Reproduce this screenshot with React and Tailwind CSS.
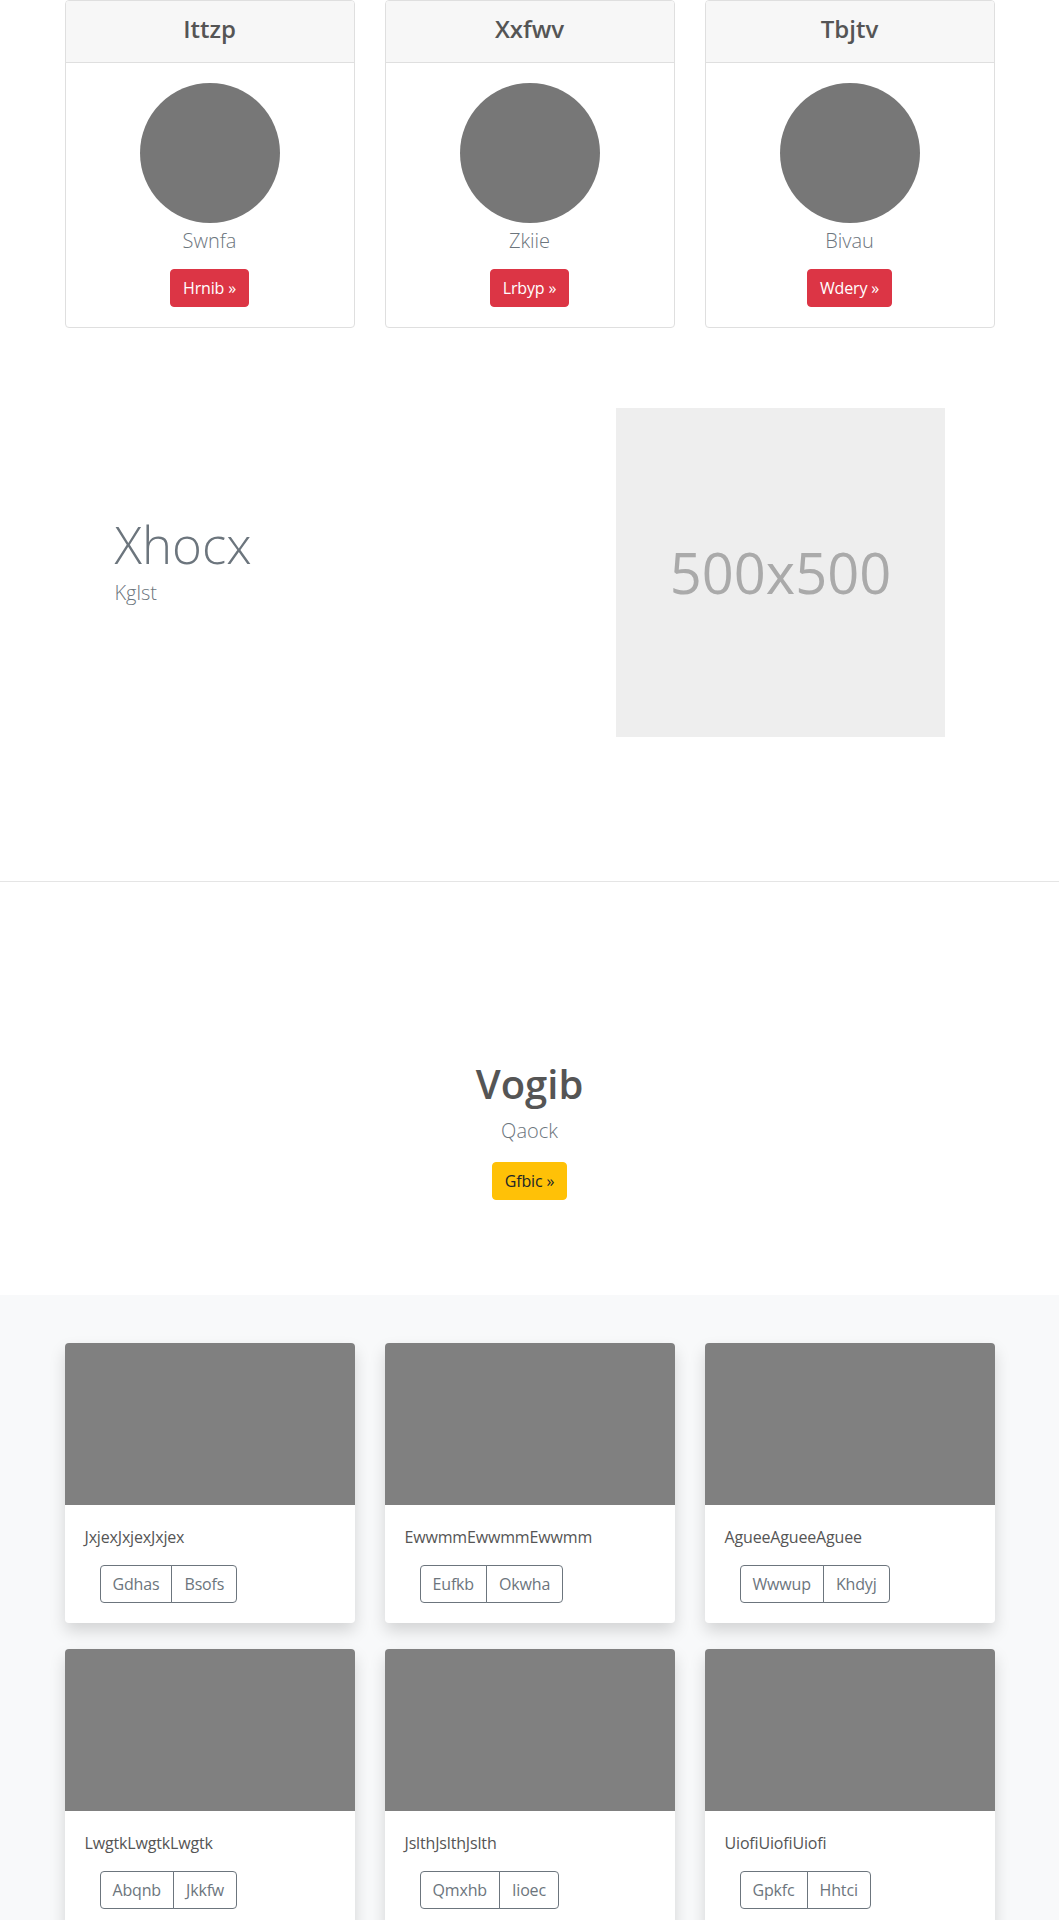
import React from "react";

const topCards = [
  { title: "Ittzp", lead: "Swnfa", btn: "Hrnib" },
  { title: "Xxfwv", lead: "Zkiie", btn: "Lrbyp" },
  { title: "Tbjtv", lead: "Bivau", btn: "Wdery" },
];

const bottomCards = [
  { text: "JxjexJxjexJxjex", a: "Gdhas", b: "Bsofs" },
  { text: "EwwmmEwwmmEwwmm", a: "Eufkb", b: "Okwha" },
  { text: "AgueeAgueeAguee", a: "Wwwup", b: "Khdyj" },
  { text: "LwgtkLwgtkLwgtk", a: "Abqnb", b: "Jkkfw" },
  { text: "JslthJslthJslth", a: "Qmxhb", b: "Iioec" },
  { text: "UiofiUiofiUiofi", a: "Gpkfc", b: "Hhtci" },
];

export default function App() {
  return (
    <div
      className="bg-white text-[#212529] text-[16px] leading-[1.5]"
      style={{ fontFamily: '"Open Sans", "Noto Sans", sans-serif' }}
    >
      {/* Top cards */}
      <section className="w-[930px] mx-auto">
        <div className="grid grid-cols-3 gap-[30px]">
          {topCards.map((c) => (
            <div
              key={c.title}
              className="border border-[#dfdfdf] rounded-[4px] overflow-hidden bg-white"
            >
              <div className="bg-[#f7f7f7] border-b border-[#dfdfdf] px-5 pt-[14px] pb-[10px] text-center">
                <h4 className="text-[24px] font-semibold leading-[1.2] mb-2 text-[#555]">
                  {c.title}
                </h4>
              </div>
              <div className="p-5 text-center">
                <div className="w-[140px] h-[140px] rounded-full bg-[#777] mx-auto" />
                <p className="text-[20px] font-light leading-[1.5] text-[#6c757d] pt-[3px] mb-[13px]">
                  {c.lead}
                </p>
                <button className="bg-[#dc3545] text-white border border-[#dc3545] rounded-[4px] px-3 py-[6px] text-[16px] leading-[24px] tracking-[-0.01em]">
                  {c.btn} »
                </button>
              </div>
            </div>
          ))}
        </div>
      </section>

      {/* Feature */}
      <section className="w-[930px] mx-auto pt-[80px] pb-[144px] flex">
        <div className="flex-1 pl-[50px] pt-[106px]">
          <h1 className="text-[51px] font-light leading-[1.2] text-[#6c757d]">
            Xhocx
          </h1>
          <p className="text-[20px] font-light leading-[1.5] text-[#6c757d] mt-[3px]">
            Kglst
          </p>
        </div>
        <div className="w-[329px] h-[329px] mr-[49.5px] bg-[#eeeeee] flex items-center justify-center">
          <span className="text-[56px] text-[#aaaaaa] leading-none">500x500</span>
        </div>
      </section>

      <hr className="border-0 border-t border-[#e5e5e5]" />

      {/* Hero */}
      <section className="pt-[178px] pb-[95px] text-center">
        <h1 className="text-[40px] font-semibold leading-[1.2] text-[#555] mb-2">
          Vogib
        </h1>
        <p className="text-[20px] font-light leading-[1.5] text-[#6c757d] mb-4">
          Qaock
        </p>
        <button className="bg-[#ffc107] text-[#212529] border border-[#ffc107] rounded-[4px] px-3 py-[6px] text-[16px] leading-[24px] tracking-[-0.01em]">
          Gfbic »
        </button>
      </section>

      {/* Gallery */}
      <section className="bg-[#f8f9fa] pt-[48px] pb-[40px]">
        <div className="w-[930px] mx-auto grid grid-cols-3 gap-x-[30px] gap-y-[26px]">
          {bottomCards.map((c) => (
            <div
              key={c.text}
              className="bg-white rounded-[4px] overflow-hidden shadow-[0_0.5rem_1rem_rgba(0,0,0,0.15)]"
            >
              <div className="h-[162px] bg-[#808080]" />
              <div className="p-5">
                <p className="text-[16px] leading-[24px] text-[#555] mb-4 tracking-[-0.01em]">{c.text}</p>
                <div className="pl-[15px]">
                  <div className="inline-flex">
                    <button className="border border-[#6c757d] text-[#6c757d] rounded-l-[4px] px-3 py-[6px] text-[16px] leading-[24px] tracking-[-0.01em]">
                      {c.a}
                    </button>
                    <button className="border border-[#6c757d] -ml-px text-[#6c757d] rounded-r-[4px] px-3 py-[6px] text-[16px] leading-[24px] tracking-[-0.01em]">
                      {c.b}
                    </button>
                  </div>
                </div>
              </div>
            </div>
          ))}
        </div>
      </section>
    </div>
  );
}
